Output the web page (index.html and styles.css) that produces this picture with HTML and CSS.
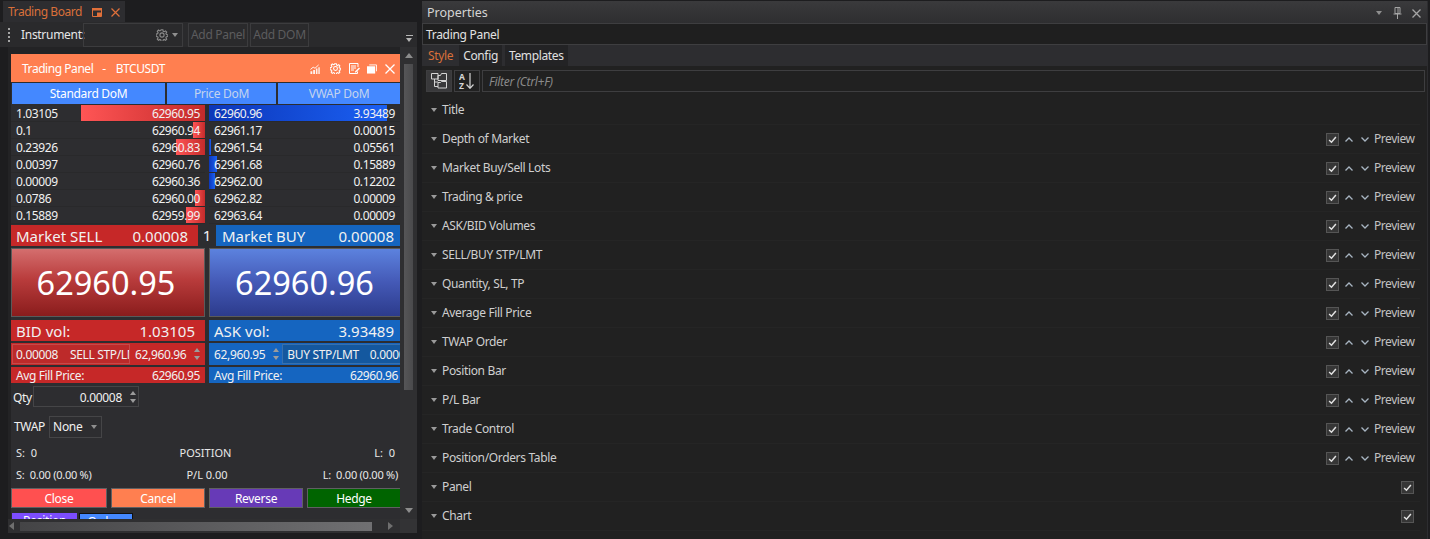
FILE: index.html
```html
<!DOCTYPE html>
<html lang="en">
<head>
<meta charset="utf-8">
<title>Trading Board</title>
<link rel="stylesheet" href="styles.css">
</head>
<body>
<svg class="defs" width="0" height="0">
  <symbol id="gear" viewBox="0 0 16 16"><path d="M6.800 1h2.400l.4 2 1.300.6 1.800-1.100 1.600 1.700-1.100 1.700.6 1.400 2 .4v2.300l-2 .4-.6 1.300 1.100 1.800-1.600 1.600-1.800-1.100-1.300.6-.4 2H6.800l-.4-2-1.300-.6-1.800 1.100-1.600-1.600 1.100-1.800-.6-1.300-2-.4V6.600l2-.4.6-1.400-1.100-1.700 1.600-1.700 1.800 1.100 1.300-.6z" fill="none" stroke="currentColor" stroke-width="1.500"/><circle cx="8" cy="8" r="2.800" fill="none" stroke="currentColor" stroke-width="1.500"/></symbol>
  <symbol id="check" viewBox="0 0 13 13"><path d="M2.500 7l2.800 2.800L10.500 3.500" fill="none" stroke="#e2e2e2" stroke-width="1.700"/></symbol>
  <symbol id="up" viewBox="0 0 8 5"><path d="M.5 4.500L4 1l3.500 3.500" fill="none" stroke="currentColor" stroke-width="1.300"/></symbol>
  <symbol id="down" viewBox="0 0 8 5"><path d="M.5.500L4 4 7.500.500" fill="none" stroke="currentColor" stroke-width="1.300"/></symbol>
</svg>
<div class="app">
  <section class="board">
    <div class="tabstrip">
      <div class="doc-tab">
        <span>Trading Board</span>
        <svg class="ico-float" viewBox="0 0 10 9"><path d="M.5.500h9v8h-9z" fill="none" stroke="#e0703a"/><path d="M0 0h10v2.500H0zM5 4.500h4V8H5z" fill="#e0703a"/></svg>
        <svg class="ico-x" viewBox="0 0 9 9"><path d="M.5.500l8 8M8.500.500l-8 8" stroke="#e0703a" stroke-width="1.200" fill="none"/></svg>
      </div>
    </div>
    <div class="toolbar">
      <span class="grip"></span>
      <span class="tb-label">Instrument:</span>
      <div class="combo">
        <svg class="combo-gear"><use href="#gear"/></svg>
        <span class="caret"></span>
      </div>
      <span class="tb-btn add-panel">Add Panel</span>
      <span class="tb-btn add-dom">Add DOM</span>
      <span class="tb-more"></span>
    </div>
    <div class="board-body">
      <div class="viewport">
        <div class="panel">
          <header class="panel-head">
            <span class="panel-title">Trading Panel</span>
            <span class="panel-dash">-</span>
            <span class="panel-sym">BTCUSDT</span>
            <div class="panel-icons">
              <svg class="pi pi-chart" viewBox="0 0 11 11"><path d="M.5 11V8h2v3zM3.500 11V6.500h2V11zM6.500 11V5h1.700v6zM9.200 11V3.500h1.500V11z" fill="#fff" opacity=".9"/><path d="M.5 6L3.500 3.500l2 1.200L9.500 1" fill="none" stroke="#fff"/></svg>
              <svg class="pi pi-gear"><use href="#gear"/></svg>
              <svg class="pi pi-note" viewBox="0 0 11 11"><path d="M.5.500h8.500v3.500M8.500 8.500v2H.5V.500" fill="none" stroke="#fff"/><path d="M2 3h5M2 5h5M2 7h3" stroke="#fff"/><path d="M6 8.500l4-4 1 1-4 4H6z" fill="#fff"/></svg>
              <svg class="pi pi-restore" viewBox="0 0 11 10"><path d="M2.500.500h8v7" fill="none" stroke="#fff"/><path d="M0 2h9v8H0z" fill="#fff"/></svg>
              <svg class="pi pi-close" viewBox="0 0 10 10"><path d="M.5.500l9 9M9.500.500l-9 9" stroke="#fff" stroke-width="1.300" fill="none"/></svg>
            </div>
          </header>
          <nav class="dom-tabs">
            <span class="dom-tab active t1">Standard DoM</span>
            <span class="dom-tab t2">Price DoM</span>
            <span class="dom-tab t3">VWAP DoM</span>
          </nav>
          <div class="dom">
            <div class="dom-row bid"><i class="bar sell" style="width:124px"></i><span>1.03105</span><span>62960.95</span></div>
            <div class="dom-row ask"><i class="bar buy" style="width:178px"></i><span>62960.96</span><span>3.93489</span></div>
            <div class="dom-row bid"><i class="bar sell" style="width:12px"></i><span>0.1</span><span>62960.94</span></div>
            <div class="dom-row ask"><span>62961.17</span><span>0.00015</span></div>
            <div class="dom-row bid"><i class="bar sell" style="width:29px"></i><span>0.23926</span><span>62960.83</span></div>
            <div class="dom-row ask"><i class="bar buy" style="width:2px"></i><span>62961.54</span><span>0.05561</span></div>
            <div class="dom-row bid"><span>0.00397</span><span>62960.76</span></div>
            <div class="dom-row ask"><i class="bar buy" style="width:8px"></i><span>62961.68</span><span>0.15889</span></div>
            <div class="dom-row bid"><span>0.00009</span><span>62960.36</span></div>
            <div class="dom-row ask"><i class="bar buy" style="width:6px"></i><span>62962.00</span><span>0.12202</span></div>
            <div class="dom-row bid"><i class="bar sell" style="width:10px"></i><span>0.0786</span><span>62960.00</span></div>
            <div class="dom-row ask"><span>62962.82</span><span>0.00009</span></div>
            <div class="dom-row bid"><i class="bar sell" style="width:19px"></i><span>0.15889</span><span>62959.99</span></div>
            <div class="dom-row ask"><span>62963.64</span><span>0.00009</span></div>
          </div>
          <div class="market">
            <div class="mkt red"><span>Market SELL</span><span>0.00008</span></div>
            <span class="mkt-one">1</span>
            <div class="mkt blue"><span>Market BUY</span><span>0.00008</span></div>
          </div>
          <div class="big">
            <div class="big-btn big-red">62960.95</div>
            <div class="big-btn big-blue">62960.96</div>
          </div>
          <div class="two vol">
            <div class="vol-cell red"><span>BID vol:</span><span>1.03105</span></div>
            <div class="vol-cell blue"><span>ASK vol:</span><span>3.93489</span></div>
          </div>
          <div class="two stp">
            <div class="stp-cell red">
              <div class="stp-btn sb-red"><span>0.00008</span><span class="stp-name">SELL STP/LMT</span></div>
              <span class="stp-val">62,960.96</span>
              <span class="spin"><i class="sp-up"></i><i class="sp-dn"></i></span>
            </div>
            <div class="stp-cell blue">
              <span class="stp-val">62,960.95</span>
              <span class="spin"><i class="sp-up"></i><i class="sp-dn"></i></span>
              <div class="stp-btn sb-blue"><span>BUY STP/LMT</span><span class="stp-name">0.00008</span></div>
            </div>
          </div>
          <div class="two avg">
            <div class="avg-cell red"><span>Avg Fill Price:</span><span>62960.95</span></div>
            <div class="avg-cell blue"><span>Avg Fill Price:</span><span>62960.96</span></div>
          </div>
          <div class="qty">
            <span class="qty-label">Qty</span>
            <div class="qty-box"><span>0.00008</span><span class="spin"><i class="sp-up"></i><i class="sp-dn"></i></span></div>
          </div>
          <div class="twap">
            <span>TWAP</span>
            <div class="twap-box"><span>None</span><span class="caret"></span></div>
          </div>
          <div class="pos pos-a"><span>S:&nbsp; 0</span><span>POSITION</span><span>L:&nbsp; 0</span></div>
          <div class="pos pos-b"><span>S:&nbsp; 0.00 (0.00 %)</span><span>P/L 0.00</span><span>L:&nbsp; 0.00 (0.00 %)</span></div>
          <div class="actions">
            <span class="act a-close">Close</span>
            <span class="act a-cancel">Cancel</span>
            <span class="act a-rev">Reverse</span>
            <span class="act a-hedge">Hedge</span>
          </div>
          <div class="bottom-tabs">
            <span class="bt bt-pos">Position</span>
            <span class="bt bt-ord">Orders</span>
          </div>
        </div>
      </div>
      <div class="vscroll">
        <span class="arrow a-up"></span>
        <span class="vthumb"></span>
        <span class="arrow a-dn"></span>
      </div>
      <div class="hscroll">
        <span class="arrow a-lt"></span>
        <span class="hthumb"></span>
        <span class="arrow a-rt"></span>
      </div>
      <div class="corner"></div>
    </div>
  </section>

  <section class="props">
    <header class="props-title">
      <span>Properties</span>
      <div class="props-icons">
        <span class="caret"></span>
        <svg class="pin" viewBox="0 0 9 12"><path d="M2 .500h5v6H2zM.500 7h8M4.500 7v5M5 1v5" fill="none" stroke="#a5a5a5"/></svg>
        <svg class="px" viewBox="0 0 9 9"><path d="M.5.500l8 8M8.500.500l-8 8" stroke="#a5a5a5" stroke-width="1.300" fill="none"/></svg>
      </div>
    </header>
    <div class="props-name">Trading Panel</div>
    <nav class="props-tabs">
      <span class="ptab on">Style</span>
      <span class="ptab">Config</span>
      <span class="ptab">Templates</span>
    </nav>
    <div class="filter-row">
      <span class="fbtn on"><svg viewBox="0 0 16 16"><path d="M.5.500H7V6H.5zM3.500 6v7.500H7M3.500 9H7M7 2.500h2.500l1-2h5v7H7zM7 9.500h2.500l1-1h5V15H7z" fill="none" stroke="#d5d5d5"/></svg></span>
      <span class="fbtn"><svg viewBox="0 0 16 16"><text x="0" y="7" class="az">A</text><text x="0" y="15.500" class="az">Z</text><path d="M11 0v15M7.500 11.500L11 15.300l3.500-3.800" fill="none" stroke="#d5d5d5" stroke-width="1.200"/></svg></span>
      <div class="filter">Filter (Ctrl+F)</div>
    </div>
    <div class="cats">
      <div class="cat"><span class="tri"></span><span class="cat-name">Title</span></div>
      <div class="cat"><span class="tri"></span><span class="cat-name">Depth of Market</span><span class="ck"><svg><use href="#check"/></svg></span><svg class="chev"><use href="#up"/></svg><svg class="chev"><use href="#down"/></svg><span class="prev">Preview</span></div>
      <div class="cat"><span class="tri"></span><span class="cat-name">Market Buy/Sell Lots</span><span class="ck"><svg><use href="#check"/></svg></span><svg class="chev"><use href="#up"/></svg><svg class="chev"><use href="#down"/></svg><span class="prev">Preview</span></div>
      <div class="cat"><span class="tri"></span><span class="cat-name">Trading &amp; price</span><span class="ck"><svg><use href="#check"/></svg></span><svg class="chev"><use href="#up"/></svg><svg class="chev"><use href="#down"/></svg><span class="prev">Preview</span></div>
      <div class="cat"><span class="tri"></span><span class="cat-name">ASK/BID Volumes</span><span class="ck"><svg><use href="#check"/></svg></span><svg class="chev"><use href="#up"/></svg><svg class="chev"><use href="#down"/></svg><span class="prev">Preview</span></div>
      <div class="cat"><span class="tri"></span><span class="cat-name">SELL/BUY STP/LMT</span><span class="ck"><svg><use href="#check"/></svg></span><svg class="chev"><use href="#up"/></svg><svg class="chev"><use href="#down"/></svg><span class="prev">Preview</span></div>
      <div class="cat"><span class="tri"></span><span class="cat-name">Quantity, SL, TP</span><span class="ck"><svg><use href="#check"/></svg></span><svg class="chev"><use href="#up"/></svg><svg class="chev"><use href="#down"/></svg><span class="prev">Preview</span></div>
      <div class="cat"><span class="tri"></span><span class="cat-name">Average Fill Price</span><span class="ck"><svg><use href="#check"/></svg></span><svg class="chev"><use href="#up"/></svg><svg class="chev"><use href="#down"/></svg><span class="prev">Preview</span></div>
      <div class="cat"><span class="tri"></span><span class="cat-name">TWAP Order</span><span class="ck"><svg><use href="#check"/></svg></span><svg class="chev"><use href="#up"/></svg><svg class="chev"><use href="#down"/></svg><span class="prev">Preview</span></div>
      <div class="cat"><span class="tri"></span><span class="cat-name">Position Bar</span><span class="ck"><svg><use href="#check"/></svg></span><svg class="chev"><use href="#up"/></svg><svg class="chev"><use href="#down"/></svg><span class="prev">Preview</span></div>
      <div class="cat"><span class="tri"></span><span class="cat-name">P/L Bar</span><span class="ck"><svg><use href="#check"/></svg></span><svg class="chev"><use href="#up"/></svg><svg class="chev"><use href="#down"/></svg><span class="prev">Preview</span></div>
      <div class="cat"><span class="tri"></span><span class="cat-name">Trade Control</span><span class="ck"><svg><use href="#check"/></svg></span><svg class="chev"><use href="#up"/></svg><svg class="chev"><use href="#down"/></svg><span class="prev">Preview</span></div>
      <div class="cat"><span class="tri"></span><span class="cat-name">Position/Orders Table</span><span class="ck"><svg><use href="#check"/></svg></span><svg class="chev"><use href="#up"/></svg><svg class="chev"><use href="#down"/></svg><span class="prev">Preview</span></div>
      <div class="cat"><span class="tri"></span><span class="cat-name">Panel</span><span class="ck"><svg><use href="#check"/></svg></span></div>
      <div class="cat"><span class="tri"></span><span class="cat-name">Chart</span><span class="ck"><svg><use href="#check"/></svg></span></div>
    </div>
  </section>
</div>
</body>
</html>
```
FILE: styles.css
```css
* { box-sizing: border-box; }
html, body { margin: 0; height: 100%; }
body {
  background: #1d1d1f;
  color: #f1f1f1;
  font: 12px/16px "Noto Sans", "Open Sans", sans-serif;
  letter-spacing: -.3px;
  overflow: hidden;
  width: 1430px;
  height: 539px;
}
.defs { position: absolute; }
.app { display: flex; height: 539px; padding-top: 1px; }
span { white-space: nowrap; }

/* left board */
.board { width: 417px; display: flex; flex-direction: column; flex: none; }
.tabstrip { height: 21px; display: flex; padding-left: 3px; }
.doc-tab {
  width: 122px; background: #2d2d30; color: #d9703a; letter-spacing: -.45px;
  display: flex; align-items: center; padding: 1px 0 0 5px;
}
.ico-float { width: 10px; height: 9px; margin-left: 10px; flex: none; }
.ico-x { width: 9px; height: 9px; margin-left: 9px; flex: none; }
.toolbar {
  height: 25px; background: #2a2a2c; display: flex; align-items: center; position: relative;
}
.grip { width: 3px; height: 14px; margin-left: 8px; border-left: 2px dotted #a5a5a5; }
.tb-label { margin-left: 10px; width: 62px; color: #e6e6e6; }
.combo {
  width: 100px; height: 24px; border: 1px solid #3c3c3e; display: flex;
  align-items: center; justify-content: flex-end; padding-right: 4px;
}
.combo-gear { width: 12px; height: 12px; color: #8a8a8a; margin-right: 4px; }
.caret { width: 0; height: 0; border: 3.500px solid transparent; border-top: 4px solid #8f8f8f; border-bottom: 0; }
.tb-btn {
  height: 24px; border: 1px solid #3c3c3e; color: #5c5c5e;
  display: flex; align-items: center; justify-content: center;
}
.add-panel { width: 60px; margin-left: 5px; }
.add-dom { width: 59px; margin-left: 2px; }
.tb-more { position: absolute; right: 4px; bottom: 5px; width: 7px; height: 7px; border-top: 1px solid #b5b5b5; }
.tb-more::after { content: ""; display: block; margin-top: 2px; width: 0; height: 0; border: 3.500px solid transparent; border-top: 4px solid #b5b5b5; border-bottom: 0; }

.board-body {
  display: grid; padding-left: 8px;
  grid-template-columns: 392px 17px; grid-template-rows: 472px 14px;
  height: 486px;
}
.viewport { overflow: hidden; padding: 7px 0 0 3px; background: #232325; }
.vscroll { background: #2f2f31; display: flex; flex-direction: column; align-items: center; }
.vthumb { width: 9px; height: 326px; background: linear-gradient(90deg, #565658, #4a4a4c); margin-top: 6px; }
.hscroll { background: #2f2f31; display: flex; align-items: center; padding: 0 7px 0 1px; }
.corner { background: #333335; }
.hthumb { width: 352px; height: 9px; margin-left: 6px; background: linear-gradient(90deg, #444446, #707072); }
.arrow { width: 0; height: 0; border: 4px solid transparent; flex: none; }
.a-up { border-top: 0; border-bottom: 5px solid #8c8c8c; margin-top: 6px; }
.a-dn { border-bottom: 0; border-top: 5px solid #8c8c8c; margin-top: auto; margin-bottom: 6px; }
.a-lt { border-left: 0; border-right: 5px solid #6f6f6f; }
.a-rt { border-right: 0; border-left: 5px solid #6f6f6f; margin-left: auto; }

.panel { width: 389px; height: 470px; background: #2d2d30; overflow: hidden; }
.panel-head {
  height: 28px; background: #ff7f50; display: flex; align-items: center;
  padding: 2px 0 0 11px; color: #fff; letter-spacing: -.45px;
}
.panel-dash { margin-left: 9px; }
.panel-sym { margin-left: 10px; }
.panel-icons { margin-left: auto; display: flex; align-items: center; color: #fff; margin-top: -1px; }
.pi { display: block; width: 10px; height: 10px; }
.pi-gear { margin-left: 10px; width: 11px; height: 11px; }
.pi-note { margin-left: 8px; width: 11px; height: 11px; }
.pi-restore { margin-left: 7px; }
.pi-close { margin-left: 8px; margin-right: 5px; }

.dom-tabs { display: flex; margin: 1px 0 0 1px; gap: 2px; height: 21px; }
.dom-tab {
  background: #4488ff; color: #c3d4ee; display: flex; align-items: center; justify-content: center;
}
.dom-tab.active { color: #fff; }
.t1 { width: 153px; }
.t2 { width: 109px; }
.t3 { width: 122px; }

.dom { display: grid; grid-template-columns: 194px 191px; column-gap: 4px; grid-auto-rows: 17px; margin-top: 1px; letter-spacing: -.4px; }
.dom-row {
  position: relative; display: flex; justify-content: space-between; align-items: center;
  padding: 2px 5px 0; height: 17px; background: #2d2d30; border-bottom: 1px solid #29292b;
}
.dom-row span { position: relative; }
.bar { position: absolute; top: 0; bottom: 0; }
.sell { right: 0; background: linear-gradient(90deg, #ff5555, #c42b2b); }
.buy { left: 0; background: linear-gradient(90deg, #0c37b9, #1b60f3); }

.red { background: #c62828; }
.blue { background: #1565c0; }

.market { display: flex; height: 21px; margin-top: 1px; font-size: 15px; letter-spacing: 0; }
.mkt { display: flex; justify-content: space-between; align-items: center; }
.mkt.red { width: 187px; padding: 0 10px 0 5px; }
.mkt.blue { width: 184px; padding: 0 6px 0 6px; }
.mkt-one { width: 18px; text-align: center; line-height: 21px; }

.big { display: flex; gap: 4px; margin-top: 2px; height: 69px; }
.big-btn {
  display: flex; align-items: center; justify-content: center; color: #fff; flex: none;
  font-size: 32.500px; letter-spacing: 0; border: 1px solid #5a5a5a;
}
.big-red { width: 194px; padding-right: 4px; background: linear-gradient(#d46e6e, #b93c3c 45%, #8a1c1c); }
.big-blue { width: 196px; padding-right: 5px; background: linear-gradient(#5c82de, #4459b6 50%, #2c3b8c); }

.two { display: flex; gap: 4px; }
.two > div { display: flex; align-items: center; }
.two > div:first-child { width: 194px; }
.two > div:last-child { width: 191px; }
.vol { margin-top: 3px; height: 21px; font-size: 15px; letter-spacing: 0; }
.vol-cell { justify-content: space-between; padding: 0 10px 0 5px; }
.vol-cell.blue { padding: 0 6px 0 5px; }
.stp { margin-top: 2px; height: 22px; letter-spacing: -.35px; }
.stp-cell { overflow: hidden; padding: 0 0 0 1px; }
.stp-btn {
  height: 20px; display: flex; align-items: center; overflow: hidden; flex: none;
  border: 1px solid rgba(255,255,255,.15); padding-top: 1px;
}
.sb-red { width: 118px; padding-left: 3px; background: #bd2a2a; }
.sb-red .stp-name { margin-left: 12px; }
.sb-blue { width: 130px; padding-left: 4px; margin-left: 3px; background: #14589f; }
.sb-blue .stp-name { margin-left: 11px; }
.stp-val { margin-left: 5px; padding-top: 1px; }
.stp-cell.blue .stp-val { margin-left: 4px; }
.spin { display: flex; flex-direction: column; gap: 4px; margin-left: 8px; flex: none; }
.spin i { display: block; width: 0; height: 0; border: 3.500px solid transparent; }
.sp-up { border-top: 0 !important; border-bottom: 4px solid #9c9c9c !important; }
.sp-dn { border-bottom: 0 !important; border-top: 4px solid #9c9c9c !important; }
.avg { margin-top: 2px; height: 16px; letter-spacing: -.4px; }
.avg-cell { justify-content: space-between; padding: 2px 5px 0; }
.avg-cell.blue { padding-right: 2px; }
.qty { display: flex; align-items: center; margin: 3px 0 0 2px; height: 21px; }
.qty-label { width: 20px; padding-top: 2px; }
.qty-box {
  width: 106px; height: 21px; border: 1px solid #454547; display: flex; align-items: center;
  justify-content: flex-end; padding: 0 2px 0 0;
}
.qty-box > span:first-child { padding-top: 2px; }
.qty-box .spin { margin-left: 8px; }
.twap { display: flex; align-items: center; margin: 8px 0 0 3px; height: 22px; padding-top: 1px; }
.twap-box {
  width: 53px; height: 22px; margin-left: 4px; border: 1px solid #454547; display: flex;
  align-items: center; justify-content: space-between; padding: 1px 4px 0 3px;
}
.pos { display: flex; justify-content: space-between; padding: 0 5px; font-size: 11px; color: #e8e8e8; letter-spacing: 0; }
.pos span { flex: 1; text-align: center; }
.pos span:first-child { text-align: left; }
.pos span:last-child { text-align: right; }
.pos-a { margin-top: 7px; height: 18px; align-items: center; }
.pos-b { margin-top: 4px; padding-right: 2px; height: 18px; align-items: center; }
.pos-b span:first-child, .pos-b span:last-child { letter-spacing: -.25px; }
.actions { display: flex; gap: 4px; margin-top: 4px; height: 20px; }
.act { display: flex; align-items: center; justify-content: center; color: #fff; border: 1px solid #606062; width: 94px; flex: none; padding-top: 2px; }
.a-close { width: 96px; background: #ff5050; }
.a-cancel { background: #ff7f50; }
.a-rev { background: #673ab7; }
.a-hedge { width: 100px; padding-right: 6px; background: #006400; }
.bottom-tabs { display: flex; gap: 2px; margin: 5px 0 0 1px; }
.bt { height: 20px; text-align: center; color: #fff; }
.bt-pos { width: 65px; background: #7c4dff; }
.bt-ord { width: 54px; background: #4488ff; border: 1px solid #111; }

/* right */
.props { width: 1006px; margin-left: 5px; background: #212121; display: flex; flex-direction: column; border-right: 1px solid #2d2d30; }
.props-title {
  height: 22px; background: linear-gradient(#3a3a3c, #2e2e30); display: flex; align-items: center; padding: 2px 6px 0 5px;
  color: #d4d4d4; font-size: 12.500px; letter-spacing: 0;
}
.props-icons { margin-left: auto; display: flex; align-items: center; }
.pin { width: 9px; height: 12px; margin-left: 11px; }
.px { width: 9px; height: 9px; margin-left: 10px; }
.props-name {
  height: 22px; border: 1px solid #3e3e40; line-height: 22px; padding-left: 3px;
  background: #1f1f1f; color: #e2e2e2;
}
.props-tabs { height: 21px; display: flex; background: #2d2d30; gap: 3px; padding-left: 2px; letter-spacing: -.35px; }
.ptab { background: #232325; padding: 0 4px; line-height: 21px; color: #e0e0e0; }
.ptab.on { background: transparent; color: #d9703a; padding-right: 3px; }
.filter-row { display: flex; height: 22px; margin: 4px 2px 0 4px; gap: 2px; }
.fbtn { width: 26px; height: 22px; border: 1px solid #3e3e40; display: flex; align-items: center; justify-content: center; flex: none; }
.fbtn.on { background: #39393b; }
.fbtn svg { width: 16px; height: 16px; }
.az { font: 700 8.500px "Noto Sans", sans-serif; fill: #d5d5d5; letter-spacing: 0; }
.filter {
  flex: 1; border: 1px solid #3e3e40; padding-left: 6px; line-height: 22px;
  font-style: italic; color: #8a8a8a;
}
.cats { padding-top: 4px; }
.cat {
  height: 29px; display: flex; align-items: center; padding: 0 6px 0 9px;
  border-bottom: 1px solid #252525; color: #cfcfcf; margin-right: 7px;
}
.tri { width: 0; height: 0; border: 3px solid transparent; border-top: 4px solid #9a9a9a; border-bottom: 0; margin-right: 5px; }
.cat-name { margin-right: auto; letter-spacing: -.35px; }
.ck {
  width: 13px; height: 13px; border: 1px solid #555; background: #363636; display: block; flex: none;
}
.ck svg { display: block; width: 11px; height: 11px; }
.chev { width: 8px; height: 5px; color: #a8b5c2; margin-left: 8px; flex: none; }
.ck + .chev { margin-left: 6px; }
.prev { margin-left: 5px; width: 40px; color: #c2c2c2; letter-spacing: -.45px; }
```
